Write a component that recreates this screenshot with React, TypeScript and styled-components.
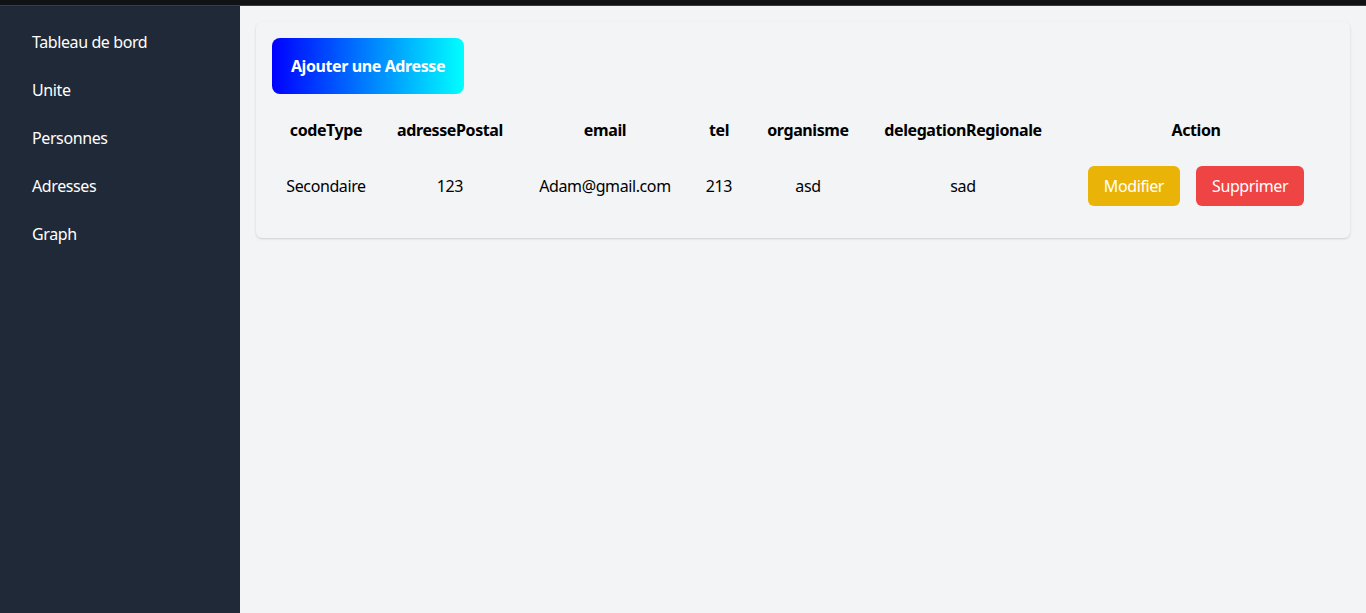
import React from "react";
import styled, { createGlobalStyle } from "styled-components";

const GlobalStyle = createGlobalStyle`
  html, body { margin: 0; padding: 0; }
  body {
    font-family: "Noto Sans", "Open Sans", sans-serif;
    font-size: 16px;
    line-height: 24px;
    letter-spacing: -0.4px;
    background: #f3f4f6;
  }
  * { box-sizing: border-box; }
`;

const Frame = styled.div`
  display: flex;
  flex-direction: column;
  height: 613px;
  overflow: hidden;
`;

const TopStrip = styled.div`
  height: 6px;
  flex: none;
  background: #111214;
  border-bottom: 1px solid #3b3c3f;
`;

const Layout = styled.div`
  display: flex;
  flex: 1;
  min-height: 0;
`;

const Sidebar = styled.nav`
  width: 240px;
  flex: none;
  background: #1f2937;
  padding: 12px 16px;
  display: flex;
  flex-direction: column;
`;

const NavItem = styled.a`
  display: block;
  padding: 12px 16px;
  color: #ffffff;
  text-decoration: none;
  font-size: 16px;
  line-height: 24px;
`;

const Main = styled.main`
  flex: 1;
  padding: 16px;
  background: #f3f4f6;
`;

const Card = styled.section`
  background: #f3f4f6;
  border-radius: 6px;
  box-shadow: 0 1px 3px rgba(0, 0, 0, 0.1), 0 1px 2px rgba(0, 0, 0, 0.06);
  padding: 16px;
`;

const AddButton = styled.button`
  border: none;
  border-radius: 8px;
  width: 192px;
  padding: 16px 0;
  font-family: inherit;
  font-size: 16px;
  line-height: 24px;
  letter-spacing: -0.4px;
  font-weight: 700;
  color: #ffffff;
  background: linear-gradient(to right, #0000ff, #00ffff);
  cursor: pointer;
`;

const Table = styled.table`
  margin-top: 16px;
  width: 100%;
  table-layout: fixed;
  border-collapse: collapse;
  color: #000;
`;

const Th = styled.th`
  padding: 8px 0;
  font-weight: 700;
  text-align: center;
  white-space: nowrap;
`;

const Td = styled.td`
  padding: 16px 0;
  text-align: center;
  white-space: nowrap;
`;

const Actions = styled.div`
  display: flex;
  justify-content: center;
  gap: 16px;
`;

const ActionButton = styled.button<{ $tone: "warn" | "danger" }>`
  border: none;
  border-radius: 6px;
  padding: 8px 16px;
  font-family: inherit;
  font-size: 16px;
  line-height: 24px;
  letter-spacing: -0.4px;
  color: #fff;
  background: ${(p) => (p.$tone === "warn" ? "#eab308" : "#ef4444")};
  cursor: pointer;
`;

const columns = [
  { key: "codeType", width: 108 },
  { key: "adressePostal", width: 140 },
  { key: "email", width: 170 },
  { key: "tel", width: 58 },
  { key: "organisme", width: 120 },
  { key: "delegationRegionale", width: 190 },
  { key: "Action", width: 276 },
];

const rows = [
  {
    codeType: "Secondaire",
    adressePostal: "123",
    email: "Adam@gmail.com",
    tel: "213",
    organisme: "asd",
    delegationRegionale: "sad",
  },
];

const navItems = ["Tableau de bord", "Unite", "Personnes", "Adresses", "Graph"];

export default function App() {
  return (
    <>
      <GlobalStyle />
      <Frame>
        <TopStrip />
        <Layout>
          <Sidebar>
            {navItems.map((n) => (
              <NavItem key={n} href="#">
                {n}
              </NavItem>
            ))}
          </Sidebar>
          <Main>
            <Card>
              <AddButton>Ajouter une Adresse</AddButton>
              <Table>
                <colgroup>
                  {columns.map((c) => (
                    <col key={c.key} style={{ width: c.width }} />
                  ))}
                </colgroup>
                <thead>
                  <tr>
                    {columns.map((c) => (
                      <Th key={c.key}>{c.key}</Th>
                    ))}
                  </tr>
                </thead>
                <tbody>
                  {rows.map((r, i) => (
                    <tr key={i}>
                      <Td>{r.codeType}</Td>
                      <Td>{r.adressePostal}</Td>
                      <Td>{r.email}</Td>
                      <Td>{r.tel}</Td>
                      <Td>{r.organisme}</Td>
                      <Td>{r.delegationRegionale}</Td>
                      <Td>
                        <Actions>
                          <ActionButton $tone="warn">Modifier</ActionButton>
                          <ActionButton $tone="danger">Supprimer</ActionButton>
                        </Actions>
                      </Td>
                    </tr>
                  ))}
                </tbody>
              </Table>
            </Card>
          </Main>
        </Layout>
      </Frame>
    </>
  );
}
